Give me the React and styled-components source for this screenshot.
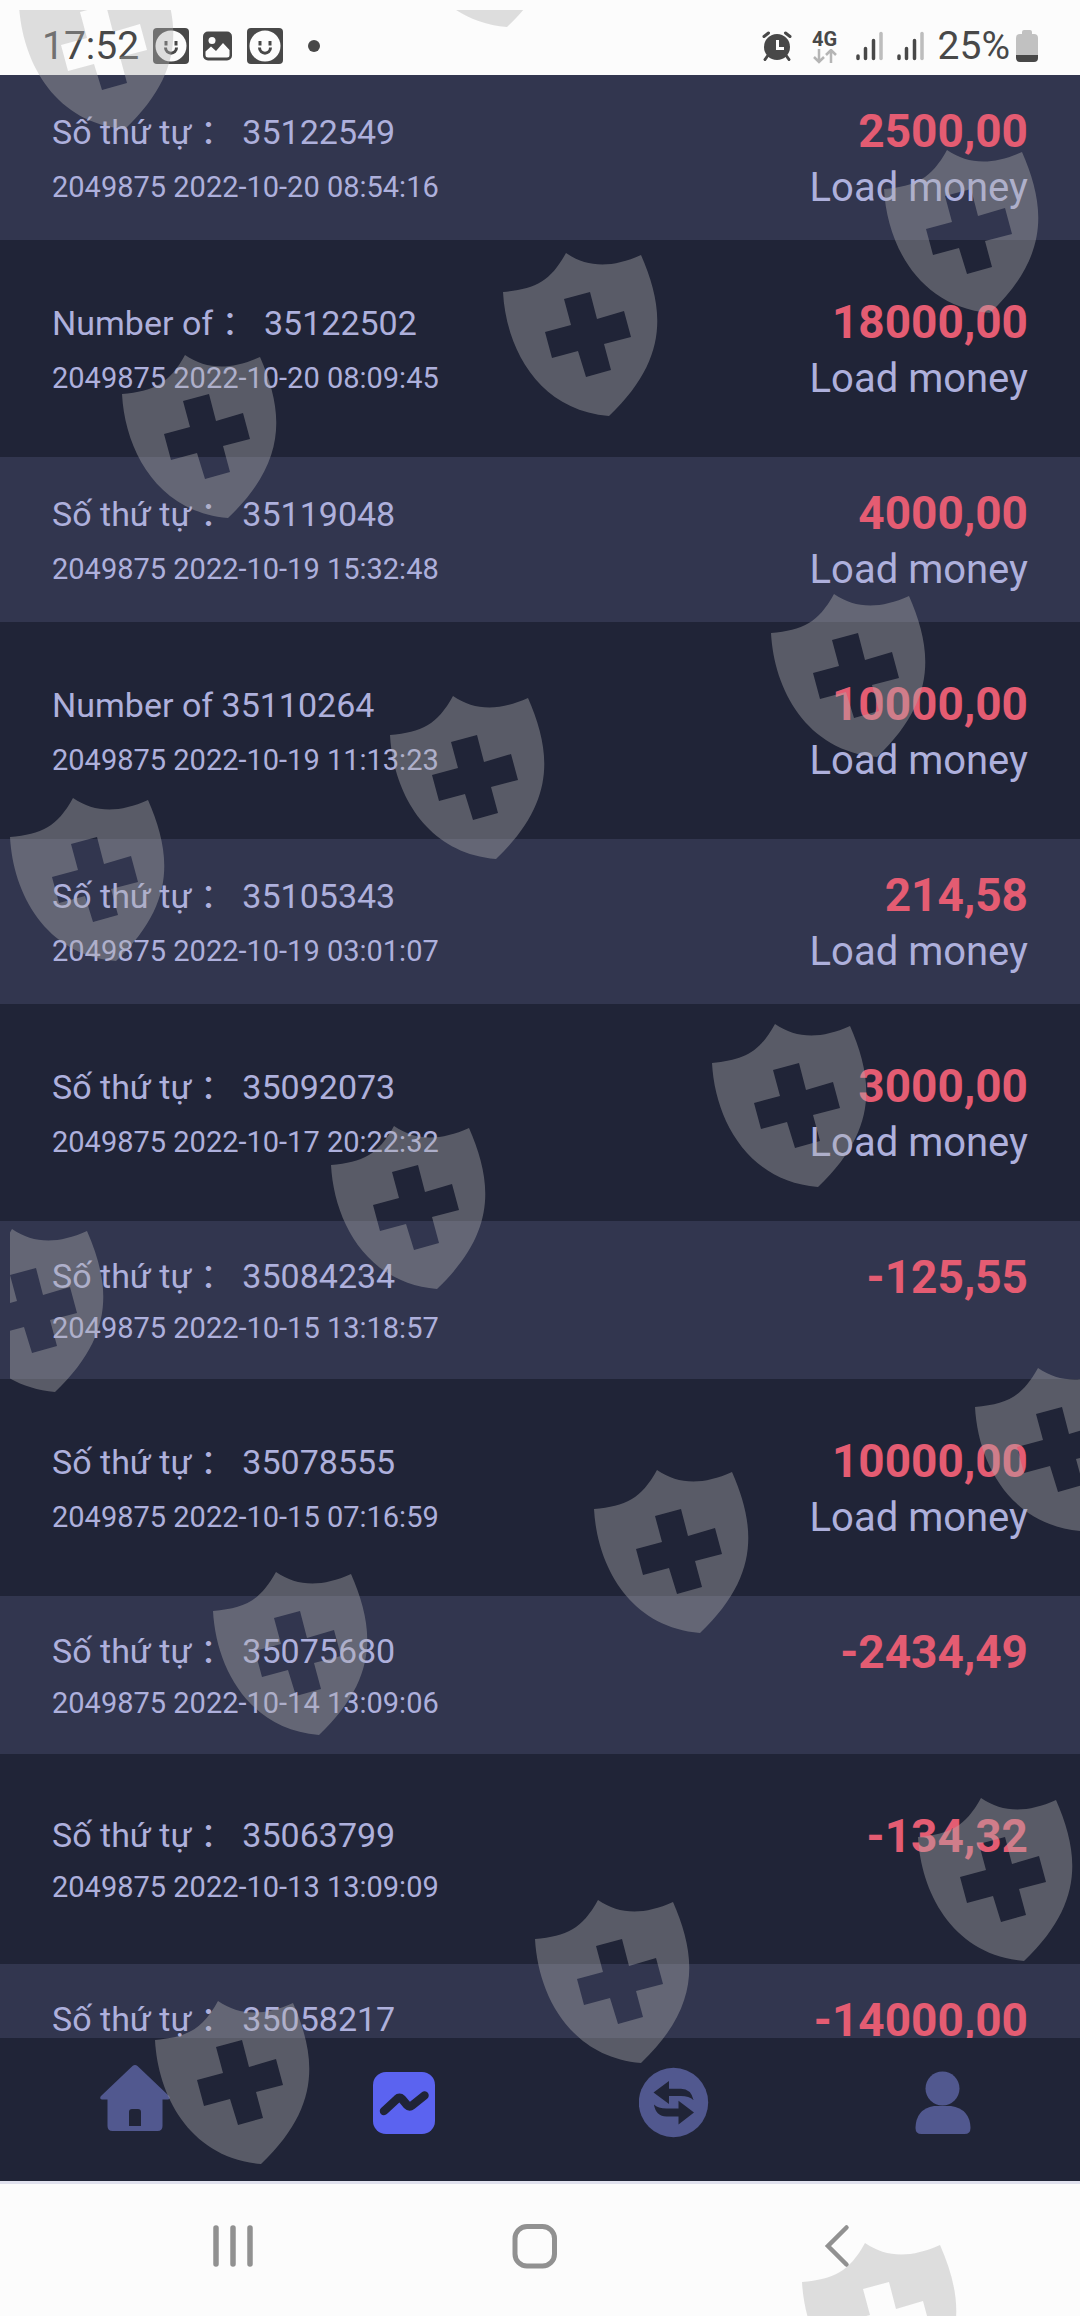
import React from "react";
import styled, { createGlobalStyle } from "styled-components";

const GlobalStyle = createGlobalStyle`
    body {
        margin: 0;
        font-family: Roboto, "Noto Sans CJK SC", sans-serif;
        background-color: #fcfcfc;
    }
    * {
        box-sizing: border-box;
    }
`;

const Screen = styled.div`
    position: relative;
    display: flex;
    flex-direction: column;
    height: 100vh;
    overflow: hidden;
`;

const StatusBar = styled.header`
    display: flex;
    justify-content: space-between;
    align-items: center;
    flex: none;
    height: 75px;
    padding: 17px 42px 0 42px;
    font-size: 39px;
    line-height: 48px;
    color: #484848;
    svg {
        display: block;
    }
`;

const StatusGroup = styled.div`
    display: flex;
    align-items: center;
    gap: 14px;
`;

const Battery = styled.div`
    display: flex;
    align-items: center;
    gap: 6px;
`;

const Network = styled.div`
    display: flex;
    flex-direction: column;
    align-items: center;
    margin: 0 4px 0 6px;
    font-size: 20px;
    line-height: 20px;
    font-weight: 700;
`;

const List = styled.ul`
    flex: 1;
    min-height: 0;
    margin: 0;
    padding: 0;
    list-style: none;
    overflow: hidden;
    background-color: #202437;
`;

const Row = styled.li`
    display: flex;
    justify-content: space-between;
    padding: 28px 52px 23px;
    background-color: #32364f;
    color: #aeb0dc;
    &:nth-child(even) {
        padding: 54px 52px 49px;
        background-color: #202437;
    }
`;

const Info = styled.div`
    display: flex;
    flex-direction: column;
    justify-content: space-around;
    padding-bottom: 3px;
`;

const Order = styled.div`
    font-size: 34px;
    line-height: 54px;
    white-space: pre;
`;

const Meta = styled.div`
    font-size: 29px;
    line-height: 50px;
`;

const Value = styled.div`
    text-align: right;
`;

const Amount = styled.div`
    font-size: 46px;
    line-height: 56px;
    font-weight: 700;
    color: #e45c72;
`;

const Kind = styled.div`
    font-size: 40px;
    line-height: 58px;
`;

const TabBar = styled.nav`
    display: flex;
    flex: none;
    height: 146px;
    padding: 27px 2px 0 0;
    border-bottom: 3px solid #e0e1ee;
    background-color: #202437;
`;

const Tab = styled.a`
    display: flex;
    justify-content: center;
    flex: 1;
    color: ${(props) => (props.$active ? "#5b63f0" : "#51588f")};
`;

const SystemBar = styled.div`
    display: flex;
    flex: none;
    height: 132px;
    padding: 0 92px 8px 82px;
`;

const SystemButton = styled.button`
    display: flex;
    align-items: center;
    justify-content: center;
    flex: 1;
    padding: 0;
    border: 0;
    background: none;
    color: #919191;
`;

const Marks = styled.div`
    position: absolute;
    top: 10px;
    right: 0;
    bottom: 0;
    left: 10px;
    overflow: hidden;
    pointer-events: none;
    color: rgba(175, 175, 175, 0.4);
`;

const Mark = styled.svg`
    position: absolute;
    left: ${(props) => props.$x - 10}px;
    top: ${(props) => props.$y - 10}px;
    width: 156px;
    height: 164px;
`;

const records = [
    { order: "Số thứ tự ： 35122549", date: "2022-10-20 08:54:16", amount: "2500,00", kind: "Load money" },
    { order: "Number of ： 35122502", date: "2022-10-20 08:09:45", amount: "18000,00", kind: "Load money" },
    { order: "Số thứ tự ： 35119048", date: "2022-10-19 15:32:48", amount: "4000,00", kind: "Load money" },
    { order: "Number of 35110264", date: "2022-10-19 11:13:23", amount: "10000,00", kind: "Load money" },
    { order: "Số thứ tự ： 35105343", date: "2022-10-19 03:01:07", amount: "214,58", kind: "Load money" },
    { order: "Số thứ tự ： 35092073", date: "2022-10-17 20:22:32", amount: "3000,00", kind: "Load money" },
    { order: "Số thứ tự ： 35084234", date: "2022-10-15 13:18:57", amount: "-125,55" },
    { order: "Số thứ tự ： 35078555", date: "2022-10-15 07:16:59", amount: "10000,00", kind: "Load money" },
    { order: "Số thứ tự ： 35075680", date: "2022-10-14 13:09:06", amount: "-2434,49" },
    { order: "Số thứ tự ： 35063799", date: "2022-10-13 13:09:09", amount: "-134,32" },
    { order: "Số thứ tự ： 35058217", date: "", amount: "-14000,00" },
];

const marks = [
    [19, -34], [401, -136],
    [884, 150], [503, 253], [122, 355],
    [771, 594], [390, 696], [10, 798],
    [712, 1024], [331, 1126], [-51, 1229],
    [975, 1368], [594, 1470], [213, 1572],
    [918, 1798], [535, 1900], [155, 2001],
    [802, 2243],
];

function FaceIcon() {
    return (
        <svg width="36" height="36" viewBox="0 0 36 36">
            <rect width="36" height="36" rx="4" fill="#484848" />
            <circle cx="18" cy="18" r="15.5" fill="#fcfcfc" />
            <path d="M13 13v4.500M23 13v4.500" stroke="#484848" strokeWidth="3" />
            <path d="M12.500 19.500c0 7.500 11 7.500 11 0" fill="none" stroke="#484848" strokeWidth="3" />
        </svg>
    );
}

function PictureIcon() {
    return (
        <svg width="30" height="30" viewBox="0 0 30 30">
            <rect width="29" height="29" y="0.500" rx="5" fill="#484848" />
            <circle cx="9" cy="9.500" r="3.500" fill="#fcfcfc" />
            <path d="M2.500 20.500 8 15.500l5 4.500 7-8 6.500 7v5q0 2.500-2.500 2.500H5q-2.500 0-2.500-2.500z" fill="#fcfcfc" />
        </svg>
    );
}

function AlarmIcon() {
    return (
        <svg width="30" height="30" viewBox="0 0 30 30">
            <circle cx="15" cy="16" r="13" fill="#484848" />
            <path d="M2 5.500 6.500 2M28 5.500 23.500 2M5.500 25l-2.500 3.500M24.500 25l2.500 3.500" stroke="#484848" strokeWidth="3" strokeLinecap="round" />
            <path d="M15.500 9v8.500H22" fill="none" stroke="#fcfcfc" strokeWidth="3" />
        </svg>
    );
}

function SignalIcon() {
    return (
        <svg width="27" height="30" viewBox="0 0 27 30">
            <g strokeWidth="3.500" strokeLinecap="round" stroke="#484848">
                <path d="M2 25v2.500M9.500 17.500v10M17.500 9.500v18" />
                <path d="M25 2.500v25" stroke="#bdbdbd" />
            </g>
        </svg>
    );
}

function ShieldMark({ x, y }) {
    return (
        <Mark $x={x} $y={y} viewBox="23 13 156 164">
            <path
                fill="currentColor"
                fillRule="evenodd"
                d="M23 52C55 49 70 42 86 13C108 28 132 28 161 15C184 68 190 118 129 176C58 170 26 108 23 52ZM84 59L91 85L65 92L72 118L98 111L106 137L131 130L124 104L151 97L144 71L117 79L110 52Z"
            />
        </Mark>
    );
}

function App() {
    return (
        <>
            <GlobalStyle />
            <Screen>
                <StatusBar>
                    <StatusGroup>
                        <span>17:52</span>
                        <FaceIcon />
                        <PictureIcon />
                        <FaceIcon />
                        <svg width="60" height="12" viewBox="0 0 60 12">
                            <circle cx="17" cy="6" r="6" fill="#484848" />
                        </svg>
                    </StatusGroup>
                    <StatusGroup>
                        <AlarmIcon />
                        <Network>
                            4G
                            <svg width="26" height="15" viewBox="0 0 26 15">
                                <path d="M7 0v13M2 8l5 5 5-5M19 14V1M14 6l5-5 5 5" fill="none" stroke="#b5b5b5" strokeWidth="2.500" />
                            </svg>
                        </Network>
                        <SignalIcon />
                        <SignalIcon />
                        <Battery>
                            <span>25%</span>
                            <svg width="22" height="32" viewBox="0 0 22 32">
                                <path d="M6 4V2q0-2 2-2h6q2 0 2 2v2h2q4 0 4 4v17H0V8q0-4 4-4z" fill="#c1c1c1" />
                                <path d="M0 25h22v3q0 4-4 4H4q-4 0-4-4z" fill="#484848" />
                            </svg>
                        </Battery>
                    </StatusGroup>
                </StatusBar>

                <List>
                    {records.map((record) => (
                        <Row key={record.order}>
                            <Info>
                                <Order>{record.order}</Order>
                                {record.date && <Meta>2049875 {record.date}</Meta>}
                            </Info>
                            <Value>
                                <Amount>{record.amount}</Amount>
                                {record.kind && <Kind>{record.kind}</Kind>}
                            </Value>
                        </Row>
                    ))}
                </List>

                <TabBar>
                    <Tab href="#home" aria-label="Home">
                        <svg width="70" height="74" viewBox="0 0 70 74" fill="currentColor">
                            <path d="M32.500 1q2.500-2 5 0L69 31q2 3-1 3.500H62.500V61q0 5-5 5h-45q-5 0-5-5V34.500H2Q-1 34 1 31zM29 61h12V47q0-3-3-3h-6q-3 0-3 3z" fillRule="evenodd" />
                        </svg>
                    </Tab>
                    <Tab href="#records" aria-label="Records" $active>
                        <svg width="70" height="74" viewBox="0 0 70 74">
                            <rect x="4" y="7" width="62" height="62" rx="13" fill="currentColor" />
                            <path d="M15 46 28 34q2.500-2.500 5 0l5 6q2.500 2.500 5 .5L55.500 30.500" fill="none" stroke="#202437" strokeWidth="8.500" strokeLinecap="round" strokeLinejoin="round" />
                        </svg>
                    </Tab>
                    <Tab href="#transfer" aria-label="Transfer">
                        <svg width="70" height="74" viewBox="0 0 70 74">
                            <circle cx="34.500" cy="37.500" r="34.700" fill="currentColor" />
                            <g fill="#202437">
                                <path d="M14.500 27.500 30 16v7.700h12q10 0 12.600 11.500Q50 31 42 31H30v8z" />
                                <path d="M55 47.500 39.500 59.500V51.500h-12Q17 51.500 14.900 39.500 19 43.500 27.500 43.500h12V35.800z" />
                            </g>
                        </svg>
                    </Tab>
                    <Tab href="#account" aria-label="Account">
                        <svg width="70" height="74" viewBox="0 0 70 74" fill="currentColor">
                            <circle cx="34.500" cy="23.500" r="17" />
                            <path d="M26 41h17q19 3 19.500 22 0 6-6 6h-43q-6 0-6-6Q8 44 26 41z" />
                        </svg>
                    </Tab>
                </TabBar>

                <SystemBar>
                    <SystemButton type="button" aria-label="Recent apps">
                        <svg width="40" height="44" viewBox="0 0 40 44">
                            <path d="M3 4v36M20 4v36M37 4v36" stroke="currentColor" strokeWidth="5.500" strokeLinecap="round" />
                        </svg>
                    </SystemButton>
                    <SystemButton type="button" aria-label="Home screen">
                        <svg width="46" height="46" viewBox="0 0 46 46">
                            <rect x="3" y="3.500" width="39.500" height="39.500" rx="12" fill="none" stroke="currentColor" strokeWidth="5" />
                        </svg>
                    </SystemButton>
                    <SystemButton type="button" aria-label="Back">
                        <svg width="26" height="44" viewBox="0 0 26 44">
                            <path d="M22.500 3.500 4 22l18.500 18.500" fill="none" stroke="currentColor" strokeWidth="4.500" strokeLinecap="round" />
                        </svg>
                    </SystemButton>
                </SystemBar>

                <Marks>
                    {marks.map(([x, y]) => (
                        <ShieldMark key={`${x},${y}`} x={x} y={y} />
                    ))}
                </Marks>
            </Screen>
        </>
    );
}

export default App;
